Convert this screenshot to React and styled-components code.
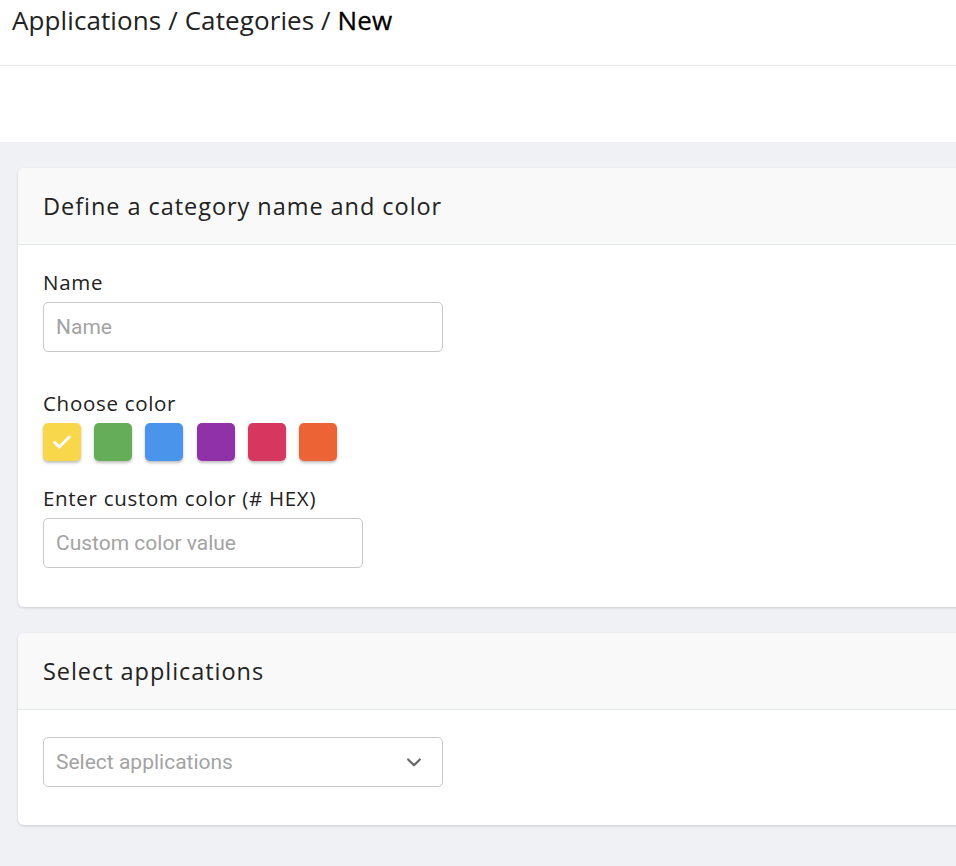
import React from "react";
import styled, { createGlobalStyle } from "styled-components";

const GlobalStyle = createGlobalStyle`
  html, body {
    margin: 0;
    padding: 0;
    background: #f0f1f5;
    overflow: hidden;
  }
  * { box-sizing: border-box; }
`;

const Page = styled.div`
  width: 956px;
  min-height: 866px;
  overflow: hidden;
  background: #f0f1f5;
  font-family: "Open Sans", "Liberation Sans", sans-serif;
  color: #222;
`;

const TopBar = styled.header`
  background: #fff;
  height: 142px;
`;

const Crumbs = styled.div`
  height: 66px;
  border-bottom: 1px solid #e8e8f0;
  padding: 2px 0 0 12px;
  font-size: 26px;
  color: #222;
  letter-spacing: 0.1px;
`;

const Current = styled.span`
  font-weight: 500;
  color: #000;
  -webkit-text-stroke: 0.3px #000;
`;

const Content = styled.main`
  padding: 26px 0 26px 18px;
  display: flex;
  flex-direction: column;
  gap: 26px;
`;

const Card = styled.section`
  width: 1000px;
  background: #fff;
  border-radius: 6px;
  box-shadow: 0 1px 3px rgba(0, 0, 0, 0.15);
  overflow: hidden;
`;

const CardHeader = styled.div`
  height: 77px;
  background: #f9f9f9;
  border-bottom: 1px solid #e3e8e8;
  padding: 0 25px;
  display: flex;
  align-items: center;
  font-size: 23.5px;
  letter-spacing: 0.95px;
  color: #222;
`;

const CardBody = styled.div`
  padding: ${(p) => p.$pad || "24px 25px 39px"};
  display: flex;
  flex-direction: column;
`;

const Label = styled.label`
  font-size: 20.5px;
  letter-spacing: 0.7px;
  color: #222;
  margin-bottom: 7px;
  line-height: 26px;
`;

const Input = styled.input`
  width: ${(p) => p.$width}px;
  height: 50px;
  border: 1px solid #c8c8c8;
  border-radius: 5px;
  padding: 0 12px;
  font-family: Roboto, "Liberation Sans", sans-serif;
  font-size: 21px;
  color: #333;
  outline: none;
  margin-bottom: ${(p) => p.$mb || 0}px;
  &::placeholder { color: #a3a3a3; }
`;

const Swatches = styled.div`
  display: flex;
  gap: 13.2px;
  margin-bottom: 24px;
`;

const Swatch = styled.button`
  width: 38px;
  height: 38px;
  border: none;
  border-radius: 5px;
  background: ${(p) => p.$color};
  box-shadow: 0 2px 3px rgba(0, 0, 0, 0.25);
  padding: 0;
  display: flex;
  align-items: center;
  justify-content: center;
`;

const Select = styled.div`
  width: 400px;
  height: 50px;
  border: 1px solid #c8c8c8;
  border-radius: 5px;
  padding: 0 18px 0 12px;
  display: flex;
  align-items: center;
  justify-content: space-between;
  font-family: Roboto, "Liberation Sans", sans-serif;
  font-size: 21px;
  color: #a3a3a3;
`;

const colors = ["#f8d74a", "#66ad5a", "#4a95eb", "#9031a8", "#d6375f", "#ec6436"];

export default function App() {
  return (
    <Page>
      <GlobalStyle />
      <TopBar>
        <Crumbs>
          Applications / Categories / <Current>New</Current>
        </Crumbs>
      </TopBar>
      <Content>
        <Card>
          <CardHeader>Define a category name and color</CardHeader>
          <CardBody>
            <Label>Name</Label>
            <Input $width={400} $mb={38} placeholder="Name" />
            <Label>Choose color</Label>
            <Swatches>
              {colors.map((c, i) => (
                <Swatch key={c} $color={c}>
                  {i === 0 && (
                    <svg width="22" height="22" viewBox="0 0 24 24" fill="none" stroke="#fff" strokeWidth="3.2" strokeLinecap="round" strokeLinejoin="round">
                      <path d="M4 12.5l5 5L20 6.5" />
                    </svg>
                  )}
                </Swatch>
              ))}
            </Swatches>
            <Label>Enter custom color (# HEX)</Label>
            <Input $width={320} placeholder="Custom color value" />
          </CardBody>
        </Card>
        <Card>
          <CardHeader>Select applications</CardHeader>
          <CardBody $pad="27px 25px 38px">
            <Select>
              Select applications
              <svg width="20" height="20" viewBox="0 0 24 24" fill="none" stroke="#666" strokeWidth="2.6" strokeLinecap="round" strokeLinejoin="round">
                <path d="M5 9l7 7 7-7" />
              </svg>
            </Select>
          </CardBody>
        </Card>
      </Content>
    </Page>
  );
}
